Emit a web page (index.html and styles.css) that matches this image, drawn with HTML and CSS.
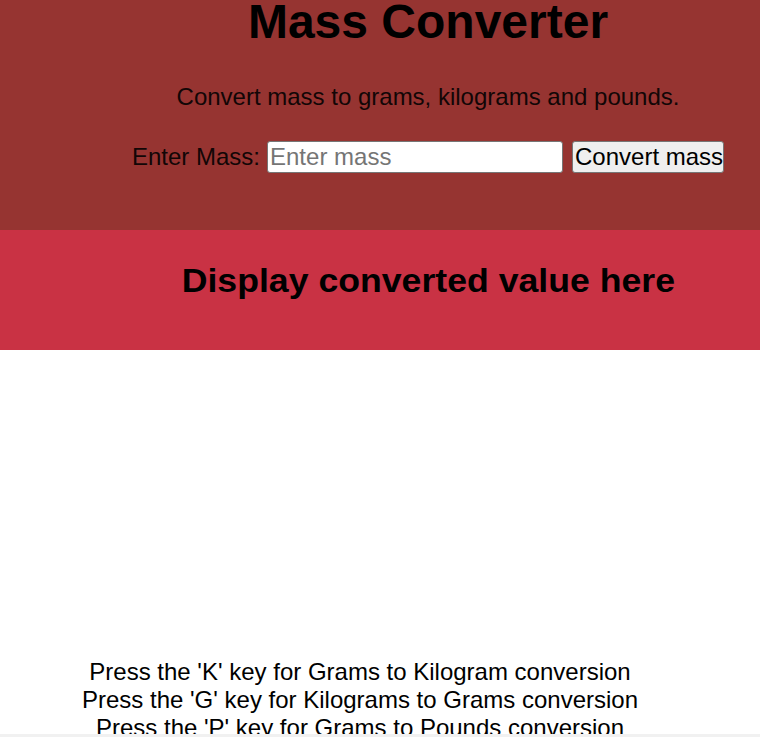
FILE: index.html
```html
<!DOCTYPE html>
<html lang="en">
<head>
<meta charset="utf-8">
<title>Mass Converter</title>
<link rel="stylesheet" href="styles.css">
</head>
<body>
  <header class="top">
    <h1 class="title">Mass Converter</h1>
    <p class="subtitle">Convert mass to grams, kilograms and pounds.</p>
    <div class="form-row">
      <label class="label" for="mass">Enter Mass:</label>
      <input class="mass-input" id="mass" type="text" placeholder="Enter mass">
      <button class="convert-btn" type="button">Convert mass</button>
    </div>
  </header>
  <section class="result">
    <h2 class="result-text">Display converted value here</h2>
  </section>
  <section class="help">
    <div class="help-line">Press the 'K' key for Grams to Kilogram conversion</div>
    <div class="help-line">Press the 'G' key for Kilograms to Grams conversion</div>
    <div class="help-line">Press the 'P' key for Grams to Pounds conversion</div>
  </section>
  <div class="scroll-edge"></div>
</body>
</html>
```

FILE: styles.css
```css
html, body {
  margin: 0;
  padding: 0;
}

body {
  font-family: "Liberation Sans", Arial, sans-serif;
  color: #000;
  background: #fff;
}

.top {
  background: #963431;
  height: 230px;
  box-sizing: border-box;
  padding-left: 96px;
  display: flex;
  flex-direction: column;
  align-items: center;
}

.title {
  margin: 0;
  font-size: 48px;
  font-weight: 700;
  line-height: 44px;
}

.subtitle {
  margin: 39px 0 0;
  font-size: 24px;
  color: #120606;
}

.form-row {
  margin-top: 30px;
  display: flex;
  align-items: center;
}

.label {
  font-size: 24px;
  color: #120606;
  margin-right: 7px;
}

.mass-input {
  width: 296px;
  height: 32px;
  box-sizing: border-box;
  margin: 0 9px 0 0;
  padding: 1px 2px;
  border: 1px solid #767676;
  border-radius: 3px;
  background: #fff;
  font-family: "Liberation Sans", Arial, sans-serif;
  font-size: 24px;
  line-height: 28px;
  color: #000;
}

.mass-input::placeholder {
  color: #757575;
}

.convert-btn {
  width: 152px;
  height: 32px;
  box-sizing: border-box;
  margin: 0;
  padding: 1px 2px;
  border: 1px solid #767676;
  border-radius: 3px;
  background: #efefef;
  font-family: "Liberation Sans", Arial, sans-serif;
  font-size: 24px;
  line-height: 28px;
  color: #000;
  white-space: nowrap;
}

.result {
  background: #c93244;
  height: 120px;
  box-sizing: border-box;
  padding-left: 96px;
  display: flex;
  justify-content: center;
}

.result-text {
  margin: 32px 0 0;
  font-size: 33px;
  font-weight: 700;
  display: inline-block;
  height: 38px;
  transform: scaleX(1.08);
}

.help {
  margin-top: 308px;
  padding-right: 40px;
  text-align: center;
  font-size: 24px;
}

.scroll-edge {
  position: fixed;
  left: 0;
  right: 0;
  bottom: 0;
  height: 3px;
  background: #f1f1f1;
}
```
